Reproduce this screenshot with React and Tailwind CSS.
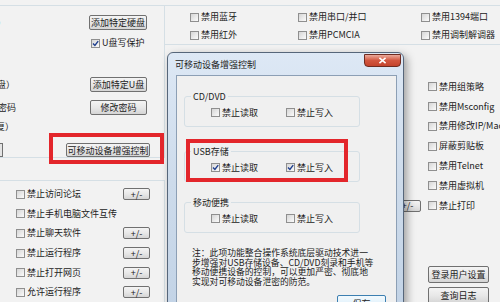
import React from 'react';

const Box = ({ checked }) => (
  <span className="relative w-[9px] h-[9px] shrink-0 border border-[#8f8f8f] bg-linear-to-br from-[#d6d6d6] to-[#fbfbfb]">
    {checked && (
      <svg viewBox="0 0 7 7" className="absolute inset-0 w-[7px] h-[7px]">
        <path d="M1 3.6 L2.9 5.5 L6.2 1.1" stroke="#1f3f8f" strokeWidth="1.4" fill="none" />
      </svg>
    )}
  </span>
);

const Check = ({ label, checked }) => (
  <div className="flex items-center gap-[2px] whitespace-nowrap">
    <Box checked={checked} />
    <span>{label}</span>
  </div>
);

const Btn = ({ children, className = '' }) => (
  <div
    className={`flex items-center justify-center border border-[#707070] rounded-[2px] bg-linear-to-b from-[#f4f4f4] via-[#e8e8e8] to-[#d5d5d5] leading-none whitespace-nowrap ${className}`}
  >
    {children}
  </div>
);

// tail of a label that is cut off by the left edge of the picture
const Clip = ({ w, children }) => (
  <div className={`flex justify-end overflow-hidden whitespace-nowrap ${w}`}>{children}</div>
);

const Group = ({ title, className = '', children }) => (
  <fieldset className={`ml-[7px] w-[176px] border border-[#d5dfe5] rounded-[3px] pb-[6px] ${className}`}>
    <legend className="ml-[6px] px-[2px] leading-[12px]">{title}</legend>
    {children}
  </fieldset>
);

const lowerLeft = [
  ['禁止访问论坛', true],
  ['禁止手机电脑文件互传', false],
  ['禁止聊天软件', true],
  ['禁止运行程序', true],
  ['禁止打开网页', true],
  ['允许运行程序', true],
];

const rightRows = [
  ['禁用组策略', false],
  ['禁用Msconfig', false],
  ['禁用修改IP/Mac地址', false],
  ['屏蔽剪贴板', false],
  ['禁用Telnet', false],
  ['禁用虚拟机', false],
  ['禁止打印', true],
];

const App = () => {
  return (
    <div className="relative w-[500px] h-[302px] overflow-hidden bg-[#f2f2f2] text-[9px] leading-[12px] text-[#222] font-['Noto_Sans_CJK_SC',sans-serif]">
      {/* main window */}
      <div className="flex h-full">
        <div className="w-[165px] shrink-0 flex flex-col">
          <div className="mt-[5px] h-[158px] border-t border-r border-b border-[#d5dfe5] flex flex-col">
            <div className="mt-[9px] h-[15px] grid grid-cols-[89px_58px] items-center">
              <Clip w="w-[6px]">（特定硬盘）</Clip>
              <Btn className="h-[15px]">添加特定硬盘</Btn>
            </div>
            <div className="mt-[6px] h-[14px] pl-[91px] flex items-center">
              <Check label="U盘写保护" checked />
            </div>
            <div className="mt-[27px] h-[15px] grid grid-cols-[90px_57px] items-center">
              <Clip w="w-[15px]">（特定U盘）</Clip>
              <Btn className="h-[15px]">添加特定U盘</Btn>
            </div>
            <div className="mt-[8px] h-[15px] grid grid-cols-[90px_57px] items-center">
              <Clip w="w-[16px]">设置U盘密码</Clip>
              <Btn className="h-[15px]">修改密码</Btn>
            </div>
            <div className="mt-[5px] h-[14px] flex items-center">
              <Clip w="w-[14px]">（可恢复）</Clip>
            </div>
            <div className="mt-[9px] h-[14px] grid grid-cols-[66px_84px] items-center">
              <div className="w-[3px] h-[14px] border-y border-r border-[#707070] bg-[#e4e4e4]" />
              <Btn className="h-[14px]">可移动设备增强控制</Btn>
            </div>
          </div>
          <div className="mt-[22px] flex-1 border-t border-r border-[#d5dfe5] pt-[3px] pl-[16px] flex flex-col">
            {lowerLeft.map(([label, btn]) => (
              <div key={label} className="h-[19.6px] grid grid-cols-[107px_27px] items-center">
                <Check label={label} />
                {btn && <Btn className="h-[12px]">+/-</Btn>}
              </div>
            ))}
          </div>
        </div>

        <div className="flex-1 flex flex-col">
          <div className="mt-[5px] h-[45px] border-y border-[#d5dfe5] pt-[2px] pl-[25px] grid grid-cols-[108px_123px_1fr] grid-rows-[18px_18px] items-center">
            <Check label="禁用蓝牙" />
            <Check label="禁用串口/并口" />
            <Check label="禁用1394端口" />
            <Check label="禁用红外" />
            <Check label="禁用PCMCIA" />
            <Check label="禁用调制解调器" />
          </div>
          <div className="flex">
            <div className="w-[229px] shrink-0" />
            <div className="pt-[32px] flex flex-col">
              {rightRows.map(([label, btn]) => (
                <div key={label} className="h-[19.8px] flex items-center">
                  <div className="w-[27px] shrink-0">{btn && <Btn className="h-[12px]">+/-</Btn>}</div>
                  <div className="ml-[7px]">
                    <Check label={label} />
                  </div>
                </div>
              ))}
              <Btn className="mt-[50px] ml-[34px] w-[61px] h-[17px]">登录用户设置</Btn>
              <Btn className="mt-[4px] ml-[34px] w-[61px] h-[17px]">查询日志</Btn>
            </div>
          </div>
        </div>
      </div>

      {/* dialog window */}
      <div className="absolute left-[167px] top-[52px] w-[237px] h-[262px] rounded-t-[6px] border border-[#56667a] bg-linear-to-b from-[#dde8f5] via-[#cddbeb] to-[#c2d3e6] shadow-[3px_3px_9px_rgba(0,0,0,0.35)] flex flex-col">
        <div className="h-[23px] pl-[7px] pt-[3px] flex items-center">可移动设备增强控制</div>
        <div className="ml-[8px] mr-[6px] flex-1 border border-[#8c9fb5] bg-[#f0f0f0] flex flex-col">
          <Group title="CD/DVD" className="mt-[15px]">
            <div className="mt-[3px] h-[14px] pl-[26px] grid grid-cols-[75px_auto] items-center">
              <Check label="禁止读取" />
              <Check label="禁止写入" />
            </div>
          </Group>
          <Group title="USB存储" className="mt-[19px]">
            <div className="mt-[3px] h-[14px] pl-[26px] grid grid-cols-[75px_auto] items-center">
              <Check label="禁止读取" checked />
              <Check label="禁止写入" checked />
            </div>
          </Group>
          <Group title="移动便携" className="mt-[15px]">
            <div className="mt-[3px] h-[14px] pl-[26px] grid grid-cols-[75px_auto] items-center">
              <Check label="禁止读取" />
              <Check label="禁止写入" />
            </div>
          </Group>
          <div className="mt-[15px] pl-[15px] text-[8.8px] leading-[9.8px] whitespace-nowrap">
            注：此项功能整合操作系统底层驱动技术进一
            <br />
            步增强对USB存储设备、CD/DVD刻录和手机等
            <br />
            移动便携设备的控制，可以更加严密、彻底地
            <br />
            实现对可移动设备泄密的防范。
          </div>
          <div className="mt-[8px] ml-[160px] w-[49px] h-[17px] flex items-center justify-center border border-[#3c7fb1] rounded-[2px] bg-linear-to-b from-[#f2f9fd] to-[#d4ecfb]">
            保存
          </div>
        </div>
        <div className="absolute left-[196px] top-[1px] w-[37px] h-[13px] rounded-b-[4px] border border-[#6e2b20] bg-linear-to-b from-[#eaa99b] via-[#d2563f] to-[#c4432c] flex items-center justify-center">
          <svg viewBox="0 0 10 8" className="w-[9px] h-[7px]">
            <path d="M1.5 1 L8.5 7 M8.5 1 L1.5 7" stroke="#fff" strokeWidth="1.8" />
          </svg>
        </div>
      </div>

      {/* red annotation frames */}
      <div className="absolute left-[49px] top-[133px] w-[115px] h-[31px] border-4 border-[#e3262b]" />
      <div className="absolute left-[186px] top-[139px] w-[162px] h-[43px] border-4 border-[#e3262b]" />
    </div>
  );
};

export default App;
